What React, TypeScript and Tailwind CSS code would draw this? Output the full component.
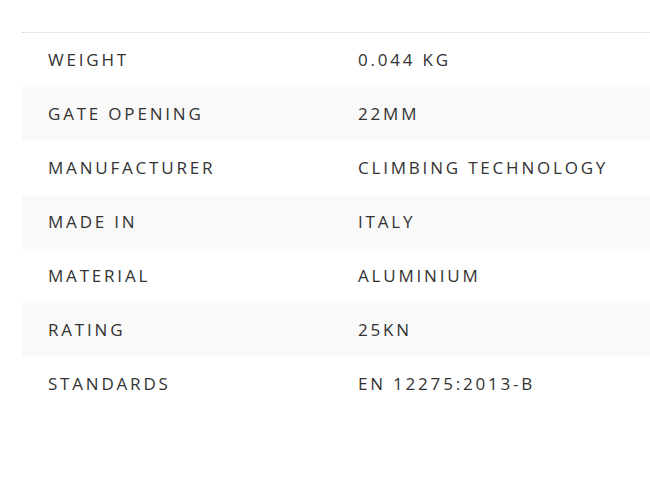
const specs: [string, string][] = [
  ['Weight', '0.044 kg'],
  ['Gate opening', '22mm'],
  ['Manufacturer', 'Climbing Technology'],
  ['Made in', 'Italy'],
  ['Material', 'Aluminium'],
  ['Rating', '25kN'],
  ['Standards', 'EN 12275:2013-B'],
];

export default function App() {
  return (
    <div className="min-h-[477px] bg-white pt-[32px] pl-[22px] font-['Open_Sans',sans-serif]">
      <div className="border-t border-dotted border-[#d6d6d6]">
        {specs.map(([label, value], i) => (
          <div
            key={label}
            className={`grid h-[54px] grid-cols-[310px_1fr] items-center text-[17px] uppercase tracking-[2.8px] text-[#333] ${
              i % 2 === 1 ? 'bg-[#f9f9f9]' : ''
            }`}
          >
            <span className="pl-[26px]">{label}</span>
            <span className="pl-[26px]">{value}</span>
          </div>
        ))}
      </div>
    </div>
  );
}
